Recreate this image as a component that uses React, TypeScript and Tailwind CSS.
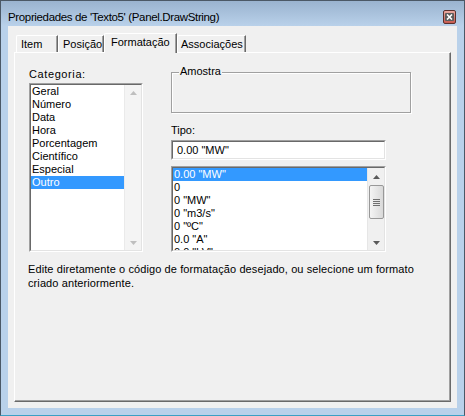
import React from 'react'

const categorias = ['Geral', 'Número', 'Data', 'Hora', 'Porcentagem', 'Científico', 'Especial', 'Outro']
const tipos = ['0.00 "MW"', '0', '0 "MW"', '0 "m3/s"', '0 "ºC"', '0.0 "A"', '0.0 "kV"']

const Arrow = ({ up, color }: { up?: boolean; color: string }) => (
  <svg width="7" height="4" viewBox="0 0 7 4">
    <path d={up ? 'M0 4 L3.5 0 L7 4 Z' : 'M0 0 L3.5 4 L7 0 Z'} fill={color} />
  </svg>
)

const Sunken = ({ className, children }: { className: string; children: React.ReactNode }) => (
  <div className={`border border-t-[#a0a0a0] border-l-[#a0a0a0] border-r-white border-b-white ${className}`}>
    <div className="w-full h-full border border-t-[#696969] border-l-[#696969] border-r-[#e3e3e3] border-b-[#e3e3e3] bg-white flex overflow-hidden">
      {children}
    </div>
  </div>
)

const Tab = ({ label, width, pl, active }: { label: string; width: string; pl: string; active?: boolean }) => (
  <div
    className={`${width} ${pl} ${
      active ? 'h-[20px] mb-[-1px] pt-[2px] z-10' : 'h-[17px] pt-[2px]'
    } bg-[#f0f0f0] border-l border-t border-white border-r border-r-[#696969] rounded-tl-[2px] shadow-[inset_-1px_0_0_#a0a0a0] leading-[13px] whitespace-nowrap relative`}
  >
    {label}
  </div>
)

export default function App() {
  return (
    <div className="w-[465px] h-[416px] flex flex-col bg-[#b9d1ea] border border-[#4b5866] border-b-[#3ba0c4] font-['Liberation_Sans',Arial,sans-serif] text-[11px] text-black">
      {/* title bar */}
      <div className="h-[25px] shrink-0 flex items-end justify-between pl-[7px] pr-[8px] bg-gradient-to-b from-[#9ab3cf] to-[#b9d1ea]">
        <span className="text-[11.5px] tracking-[-0.35px] leading-[15px] mb-[1px]">Propriedades de 'Texto5' (Panel.DrawString)</span>
        <div className="w-[13px] h-[14px] mb-[2px] rounded-[2px] border border-[#5a2f2c] bg-gradient-to-b from-[#e9aaa2] to-[#c75a4f] flex items-center justify-center">
          <div className="w-[9px] h-[8px] bg-[#5c5c5c] rounded-[1px] flex items-center justify-center">
            <svg width="7" height="6" viewBox="0 0 7 6">
              <path d="M1 0.5 L6 5.5 M6 0.5 L1 5.5" stroke="#fff" strokeWidth="1.6" />
            </svg>
          </div>
        </div>
      </div>

      {/* client */}
      <div className="flex-1 mx-[7px] mb-[7px] bg-[#f0f0f0] flex flex-col pt-[7px] px-[6px] pb-[6px]">
        <div className="h-[19px] shrink-0 flex items-end pl-[2px]">
          <Tab label="Item" width="w-[42px]" pl="pl-[4px]" />
          <Tab label="Posição" width="w-[46px]" pl="pl-[4px]" />
          <Tab label="Formatação" width="w-[73px]" pl="pl-[6px]" active />
          <Tab label="Associações" width="w-[69px]" pl="pl-[3px]" />
        </div>

        <div className="flex-1 border-l border-t border-white border-r border-b border-r-[#696969] border-b-[#696969] shadow-[inset_-1px_-1px_0_#a0a0a0] pl-[14px] pt-[15px] flex flex-col">
          <div className="flex">
            {/* left column */}
            <div className="w-[114px] flex flex-col">
              <div className="leading-[13px] tracking-[0.6px]">Categoria:</div>
              <Sunken className="mt-[2px] h-[169px]">
                <div className="flex-1 flex flex-col">
                  {categorias.map(c => (
                    <div
                      key={c}
                      className={`h-[13px] leading-[13px] pl-[1px] ${c === 'Outro' ? 'bg-[#3399ff] text-white' : ''}`}
                    >
                      {c}
                    </div>
                  ))}
                </div>
                <div className="w-[17px] shrink-0 bg-[#f4f4f4] border-l border-[#eaeaea] flex flex-col items-center justify-between pt-[6px] pb-[5px]">
                  <Arrow up color="#bfbfbf" />
                  <Arrow color="#bfbfbf" />
                </div>
              </Sunken>
            </div>

            {/* right column */}
            <div className="ml-[28px] flex flex-col">
              <div className="relative mt-[4px] w-[240px] h-[41px] border border-[#a0a0a0] shadow-[inset_1px_1px_0_#fff,1px_1px_0_#fff]">
                <span className="absolute left-[7px] top-[-8px] px-[1px] bg-[#f0f0f0] leading-[13px]">Amostra</span>
              </div>
              <div className="mt-[11px] leading-[13px]">Tipo:</div>
              <Sunken className="mt-[3px] w-[215px] h-[20px]">
                <div className="pl-[4px] leading-[16px]">0.00 "MW"</div>
              </Sunken>
              <Sunken className="mt-[6px] w-[215px] h-[86px]">
                <div className="flex-1 flex flex-col">
                  {tipos.map((t, i) => (
                    <div
                      key={t}
                      className={`h-[13px] shrink-0 leading-[13px] pl-[1px] ${i === 0 ? 'bg-[#3399ff] text-white' : ''}`}
                    >
                      {t}
                    </div>
                  ))}
                </div>
                <div className="w-[17px] shrink-0 bg-[#f0f0f0] border-l border-[#e6e6e6] flex flex-col items-center pt-[7px] pb-[5px]">
                  <Arrow up color="#5a5a5a" />
                  <div className="mt-[6px] w-[15px] h-[34px] rounded-[2px] border border-[#989898] bg-gradient-to-r from-[#f4f4f4] to-[#d9d9d9] flex flex-col items-center justify-center gap-[1px]">
                    <div className="w-[7px] h-[1px] bg-[#6f6f6f]" />
                    <div className="w-[7px] h-[1px] bg-[#6f6f6f]" />
                    <div className="w-[7px] h-[1px] bg-[#6f6f6f]" />
                    <div className="w-[7px] h-[1px] bg-[#6f6f6f]" />
                  </div>
                  <div className="flex-1" />
                  <Arrow color="#5a5a5a" />
                </div>
              </Sunken>
            </div>
          </div>

          <div className="mt-[10px] -ml-[1px] leading-[14px] w-[400px] tracking-[0.1px]">
            Edite diretamente o código de formatação desejado, ou selecione um formato criado anteriormente.
          </div>
        </div>
      </div>
    </div>
  )
}
